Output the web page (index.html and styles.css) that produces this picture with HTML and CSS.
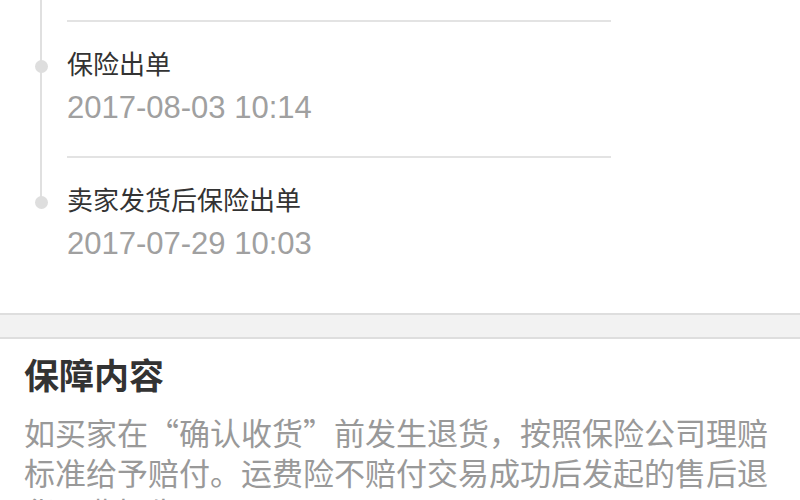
FILE: index.html
```html
<!DOCTYPE html>
<html>
  <head>
    <title>运费险详情</title>
    <meta charset="utf-8" />
    <link rel="stylesheet" href="styles.css">
  </head>
  <body>
    <div class="timeline">
      <div class="item">
        <div class="entry">
          <div class="title">保险出单</div>
          <div class="date">2017-08-03 10:14</div>
        </div>
      </div>
      <div class="item">
        <div class="entry">
          <div class="title">卖家发货后保险出单</div>
          <div class="date">2017-07-29 10:03</div>
        </div>
      </div>
    </div>
    <div class="band"></div>
    <div class="section">
      <h2>保障内容</h2>
      <p>如买家在“确认收货”前发生退货，按照保险公司理赔标准给予赔付。运费险不赔付交易成功后发起的售后退货运费损失。</p>
    </div>
  </body>
</html>
```

FILE: styles.css
```css
body {
    margin: 0;
    background: #fff;
    font-family: "Liberation Sans", "Noto Sans CJK SC", sans-serif; }

div.timeline {
    padding-top: 20px;
    padding-bottom: 21px; }

div.item {
    position: relative;
    padding-left: 67px; }
div.item::before {
    content: '';
    position: absolute;
    left: 40px;
    top: 0;
    bottom: 0;
    width: 2px;
    background: #e0e0e0; }
div.item:first-child::before {
    top: -20px; }
div.item:last-child::before {
    bottom: auto;
    height: 48px; }
div.item::after {
    content: '';
    position: absolute;
    left: 35px;
    top: 40px;
    width: 13px;
    height: 13px;
    border-radius: 50%;
    background: #dedede; }

div.entry {
    width: 544px;
    border-top: 2px solid #e3e3e3;
    padding: 25px 0 28px; }
div.entry .title {
    font-size: 26px;
    line-height: 36px;
    color: #333; }
div.entry .date {
    margin-top: 5px;
    font-size: 31px;
    line-height: 40px;
    color: #a0a0a0; }

div.band {
    height: 22px;
    background: #f2f2f2;
    border-top: 2px solid #dedede;
    border-bottom: 2px solid #dedede; }

div.section {
    padding: 16px 24px 0; }
div.section h2 {
    margin: 0;
    font-size: 35px;
    line-height: 44px;
    font-weight: bold;
    color: #333; }
div.section p {
    margin: 13px 0 0;
    font-family: "Noto Sans CJK SC", sans-serif;
    font-size: 31px;
    line-height: 40px;
    color: #999; }
```
